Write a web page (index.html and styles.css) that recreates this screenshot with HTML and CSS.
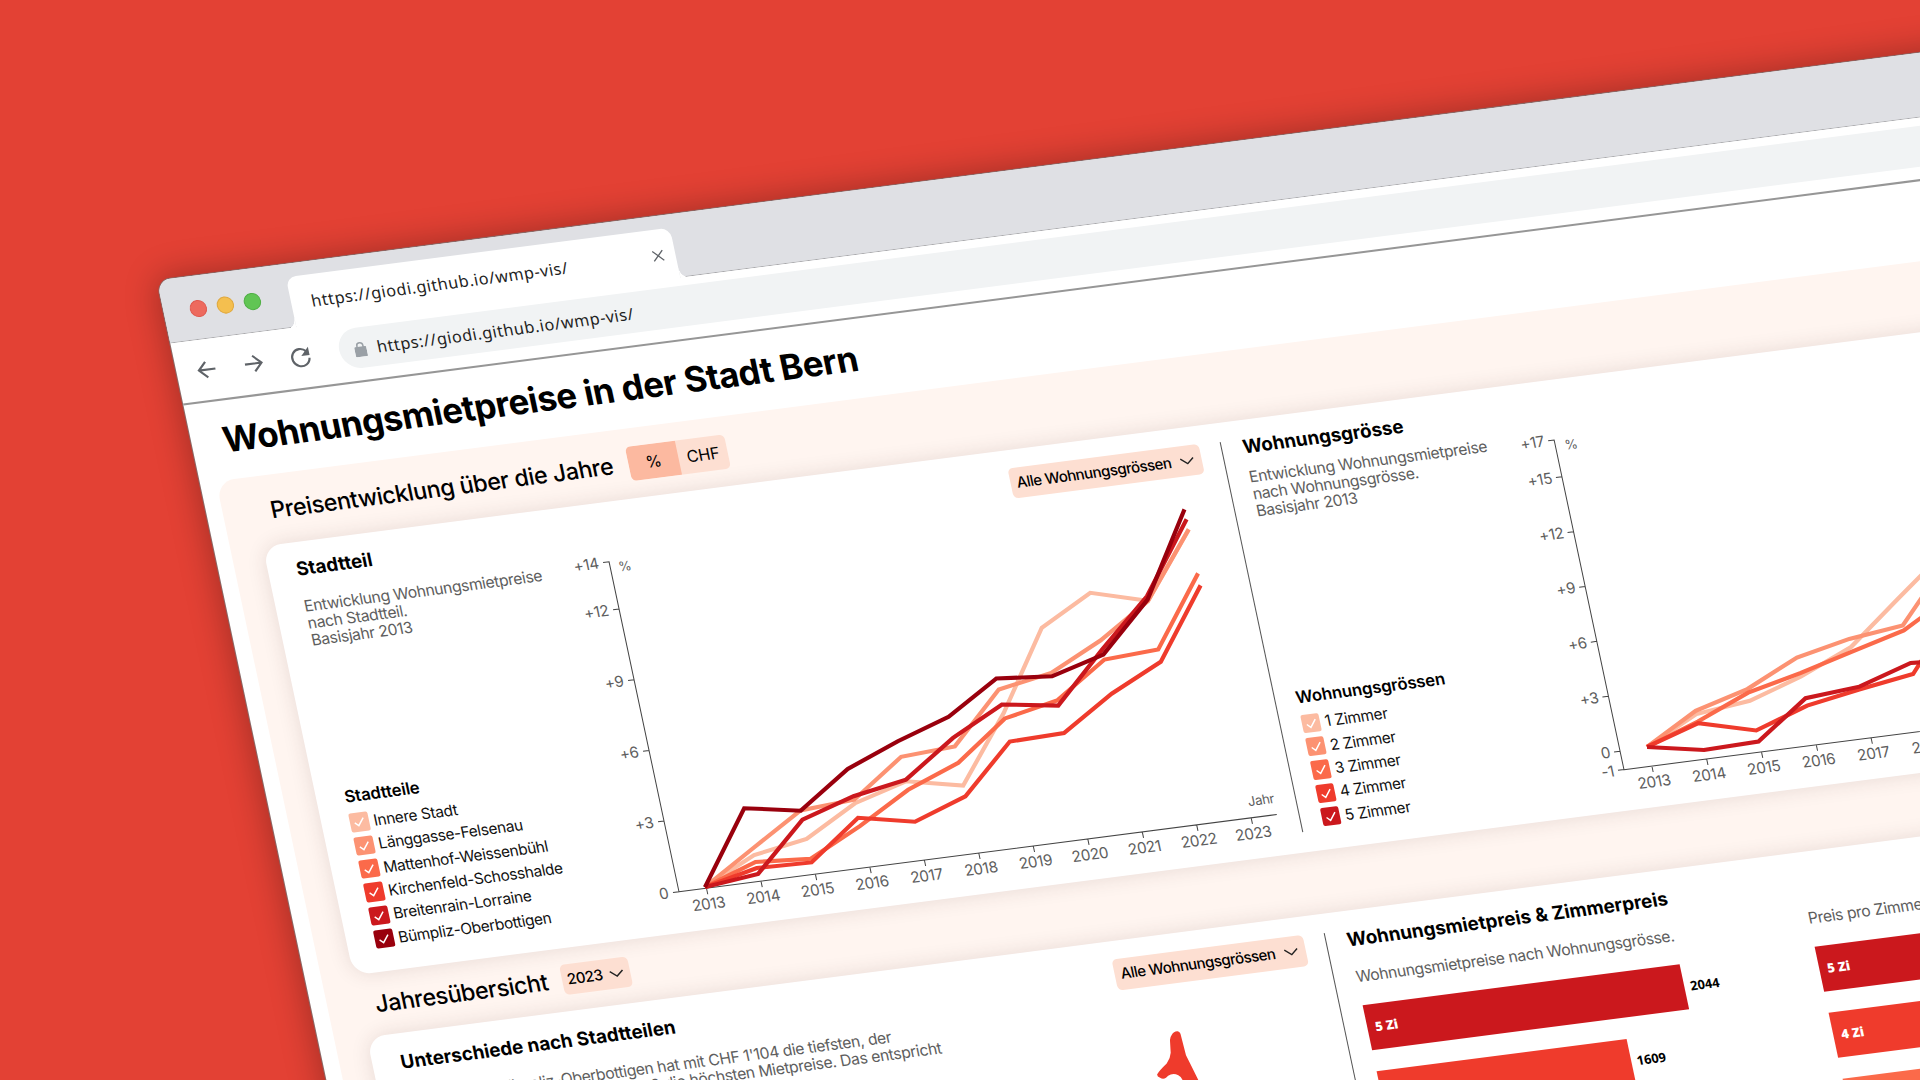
FILE: index.html
```html
<!DOCTYPE html>
<html lang="de">
<head>
<meta charset="utf-8">
<title>Wohnungsmietpreise in der Stadt Bern</title>
<link rel="stylesheet" href="styles.css">
</head>
<body>
<div class="stage">
<div class="window">
  <header class="tabstrip">
    <div class="lights"><i class="light red"></i><i class="light yellow"></i><i class="light green"></i></div>
    <div class="tab">
      <span class="url">https://giodi.github.io/wmp-vis/</span>
      <svg class="close" viewBox="0 0 12 12"><path d="M1 1 11 11M11 1 1 11"/></svg>
    </div>
  </header>
  <nav class="toolbar">
    <svg class="nav" viewBox="0 0 24 24"><path d="M21.500 12H3.500M12 3.500 3.500 12 12 20.500"/></svg>
    <svg class="nav" viewBox="0 0 24 24"><path d="M2.500 12H20.500M12 3.500 20.500 12 12 20.500"/></svg>
    <svg class="nav reload" viewBox="0 0 24 24"><path d="M19.300 6.300A9.300 9.300 0 1 0 21.300 13.500"/><path class="solid" d="M22 1.500V10.500H13Z"/></svg>
    <div class="address">
      <svg class="lock" viewBox="0 0 12 15"><rect x="0" y="5" width="12" height="10" rx="1.200"/><path d="M3 6V4a3 3 0 0 1 6 0V6"/></svg>
      <span class="url">https://giodi.github.io/wmp-vis/</span>
    </div>
  </nav>
  <main class="page">
    <h1>Wohnungsmietpreise in der Stadt Bern</h1>
    <div class="panel">
      <div class="section-head">
        <h2>Preisentwicklung über die Jahre</h2>
        <div class="toggle"><span class="on">%</span><span>CHF</span></div>
      </div>
      <section class="card trend">
        <div class="left">
          <div class="side">
            <h3 class="hood">Stadtteil</h3>
            <p class="desc spaced">Entwicklung Wohnungsmietpreise<br>nach Stadtteil.<br>Basisjahr 2013</p>
            <div class="legend">
              <h4>Stadtteile</h4>
              <label><i class="box c1"><svg viewBox="0 0 18 18"><path d="M4.500 9.500 7.800 12.700 13.500 5.500"/></svg></i>Innere Stadt</label>
              <label><i class="box c2"><svg viewBox="0 0 18 18"><path d="M4.500 9.500 7.800 12.700 13.500 5.500"/></svg></i>Länggasse-Felsenau</label>
              <label><i class="box c3"><svg viewBox="0 0 18 18"><path d="M4.500 9.500 7.800 12.700 13.500 5.500"/></svg></i>Mattenhof-Weissenbühl</label>
              <label><i class="box c4"><svg viewBox="0 0 18 18"><path d="M4.500 9.500 7.800 12.700 13.500 5.500"/></svg></i>Kirchenfeld-Schosshalde</label>
              <label><i class="box c5"><svg viewBox="0 0 18 18"><path d="M4.500 9.500 7.800 12.700 13.500 5.500"/></svg></i>Breitenrain-Lorraine</label>
              <label><i class="box c6"><svg viewBox="0 0 18 18"><path d="M4.500 9.500 7.800 12.700 13.500 5.500"/></svg></i>Bümpliz-Oberbottigen</label>
            </div>
          </div>
          <div class="plot">
            <div class="select wide">Alle Wohnungsgrössen<svg viewBox="0 0 14 8"><path d="M1 1.500 7 6.500 13 1.500"/></svg></div>
            <svg class="chart" viewBox="346 320 655 370">
              <g class="axis">
                <path d="M376 330.700H382V660.600H376M376 377.900H382M376 448.600H382M376 519.300H382M376 589.900H382M382 660.600H979.800M409.500 660.600v6M464 660.600v6M518.400 660.600v6M572.900 660.600v6M627.400 660.600v6M681.800 660.600v6M736.300 660.600v6M790.800 660.600v6M845.300 660.600v6M899.700 660.600v6M954.200 660.600v6"/>
                <g class="end"><text x="371.500" y="335.900">+14</text><text x="371.500" y="383.100">+12</text><text x="371.500" y="453.800">+9</text><text x="371.500" y="524.500">+6</text><text x="371.500" y="595.100">+3</text><text x="371.500" y="665.800">0</text><text class="unit" x="980.500" y="649">Jahr</text></g>
                <g class="mid"><text x="408.500" y="681.400">2013</text><text x="463" y="681.400">2014</text><text x="517.400" y="681.400">2015</text><text x="571.900" y="681.400">2016</text><text x="626.400" y="681.400">2017</text><text x="680.800" y="681.400">2018</text><text x="735.300" y="681.400">2019</text><text x="789.800" y="681.400">2020</text><text x="844.300" y="681.400">2021</text><text x="898.700" y="681.400">2022</text><text x="953.200" y="681.400">2023</text><text class="unit" x="396.500" y="341.300">%</text></g>
              </g>
              <g class="lines" transform="translate(-1.3 -.6)">
                <polyline class="s1" points="409.500,660 464,635 518.400,625.900 572.900,597.200 627.400,582.200 681.800,593.600 736.300,528 790.800,450 845.300,421.900 899.700,437 954.200,372.600"/>
                <polyline class="s2" points="409.500,660 464,628.400 518.400,597.400 572.900,593.700 627.400,557.800 681.800,554.400 736.300,504.600 790.800,495 845.300,469.700 899.700,437.300 954.200,372.600"/>
                <polyline class="s3" points="409.500,660 464,641.900 518.400,645.600 572.900,620.100 627.400,590.800 681.800,570.800 736.300,533.500 790.800,522.600 845.300,488.700 899.700,485.700 954.200,416.600"/>
                <polyline class="s4" points="409.500,660 464,647.900 518.400,649.300 572.900,611.700 627.400,622.700 681.800,604.300 736.300,556.600 790.800,555.100 845.300,522.900 899.700,498 954.200,428.600"/>
                <polyline class="s5" points="409.500,660 464,653.800 518.400,606.500 572.900,590.200 627.400,580.600 681.800,545.900 736.300,519.500 790.800,527.700 845.300,478.500 899.700,432.500 954.200,362.500"/>
                <polyline class="s6" points="409.500,660 464,588.100 518.400,597.600 572.900,562.900 627.400,542.200 681.800,524.900 736.300,493.500 790.800,498.400 845.300,483.700 899.700,435.700 954.200,352.500"/>
              </g>
            </svg>
          </div>
        </div>
        <div class="right">
          <div class="side">
            <h3 class="size">Wohnungsgrösse</h3>
            <p class="desc">Entwicklung Wohnungsmietpreise<br>nach Wohnungsgrösse.<br>Basisjahr 2013</p>
            <div class="legend">
              <h4>Wohnungsgrössen</h4>
              <label><i class="box c1"><svg viewBox="0 0 18 18"><path d="M4.500 9.500 7.800 12.700 13.500 5.500"/></svg></i>1 Zimmer</label>
              <label><i class="box c2"><svg viewBox="0 0 18 18"><path d="M4.500 9.500 7.800 12.700 13.500 5.500"/></svg></i>2 Zimmer</label>
              <label><i class="box c3"><svg viewBox="0 0 18 18"><path d="M4.500 9.500 7.800 12.700 13.500 5.500"/></svg></i>3 Zimmer</label>
              <label><i class="box c4"><svg viewBox="0 0 18 18"><path d="M4.500 9.500 7.800 12.700 13.500 5.500"/></svg></i>4 Zimmer</label>
              <label><i class="box c5"><svg viewBox="0 0 18 18"><path d="M4.500 9.500 7.800 12.700 13.500 5.500"/></svg></i>5 Zimmer</label>
            </div>
          </div>
          <svg class="chart" viewBox="1290 320 655 370">
            <g class="axis">
              <path d="M1321 331H1327V660.400H1321M1321 367.700H1327M1321 422.600H1327M1321 477.400H1327M1321 532.300H1327M1321 587.200H1327M1321 642.100H1327M1327 660.600H1940M1354.900 660.600v6M1409.700 660.600v6M1464.500 660.600v6M1519.300 660.600v6M1574.100 660.600v6M1628.900 660.600v6M1683.700 660.600v6"/>
              <g class="end"><text x="1317" y="336.200">+17</text><text x="1317" y="372.900">+15</text><text x="1317" y="427.800">+12</text><text x="1317" y="482.600">+9</text><text x="1317" y="537.500">+6</text><text x="1317" y="592.400">+3</text><text x="1317" y="647.300">0</text><text x="1317" y="665.800">-1</text></g>
              <g class="mid"><text x="1354" y="681.400">2013</text><text x="1408.800" y="681.400">2014</text><text x="1463.600" y="681.400">2015</text><text x="1518.400" y="681.400">2016</text><text x="1573.200" y="681.400">2017</text><text x="1628" y="681.400">2018</text><text class="unit" x="1342.500" y="341.800">%</text></g>
            </g>
            <g class="lines" transform="translate(-.8 -.4)">
              <polyline class="s1" points="1354.900,641.800 1409.700,616 1464.500,609.800 1519.300,592.600 1574.100,570.200 1628.900,529.700 1683.700,490"/>
              <polyline class="s2" points="1354.900,641.800 1409.700,612.700 1464.500,598.100 1519.300,573.600 1574.100,562.100 1628.900,555.700 1683.700,500"/>
              <polyline class="s3" points="1354.900,641.800 1409.700,623.400 1464.500,601.700 1519.300,589.200 1574.100,574.900 1628.900,560.600 1683.700,532"/>
              <polyline class="s4" points="1354.900,641.800 1409.700,625.100 1464.500,639.500 1519.300,621.700 1574.100,612.400 1628.900,604.300 1683.700,545"/>
              <polyline class="s5" points="1354.900,641.800 1409.700,651.900 1464.500,650.500 1519.300,614.300 1574.100,609.800 1628.900,593.200 1683.700,597"/>
            </g>
          </svg>
        </div>
      </section>
      <div class="section-head year">
        <h2>Jahresübersicht</h2>
        <div class="select">2023<svg viewBox="0 0 14 8"><path d="M1 1.500 7 6.500 13 1.500"/></svg></div>
      </div>
      <section class="card overview">
        <div class="left">
          <div class="side broad">
            <h3 class="diff">Unterschiede nach Stadtteilen</h3>
            <p class="desc spaced">Der Stadtteil Bümpliz-Oberbottigen hat mit CHF 1'104 die tiefsten, der<br>Stadtteil Innere Stadt mit CHF 1'600 die höchsten Mietpreise. Das entspricht</p>
          </div>
          <div class="plot">
            <div class="select wide">Alle Wohnungsgrössen<svg viewBox="0 0 14 8"><path d="M1 1.500 7 6.500 13 1.500"/></svg></div>
            <svg class="map" viewBox="661 812 340 188"><path d="M832 862.100Q835 858.500 838.500 859.200Q840.500 859.500 840.800 862L841.800 883.400Q845 895 848.700 909.300L854 950H840L833.400 907.300Q832.500 903.500 830.200 901.900Q826.500 899.300 823 900.300Q820 901 817.700 902.900Q814.500 904.300 811.900 902.200Q809 900.500 809.800 898.500Q812 895.500 821.300 889.100Q826 884.500 827.400 879.200L829.200 867.400Q829.500 864.500 832 862.100Z"/></svg>
          </div>
        </div>
        <div class="right">
          <h3 class="price">Wohnungsmietpreis &amp; Zimmerpreis</h3>
          <div class="bars-grid">
            <div class="bars">
              <p class="desc">Wohnungsmietpreise nach Wohnungsgrösse.</p>
              <div class="row"><b class="c5" style="width:317.500px">5 Zi</b>2044</div>
              <div class="row"><b class="c4" style="width:250px">4 Zi</b>1609</div>
            </div>
            <div class="bars">
              <p class="desc">Preis pro Zimmer.</p>
              <div class="row"><b class="c5" style="width:255px">5 Zi</b></div>
              <div class="row"><b class="c4" style="width:250px">4 Zi</b></div>
              <div class="row"><b class="c3" style="width:275px"></b></div>
            </div>
          </div>
        </div>
      </section>
    </div>
  </main>
</div>
</div>
</body>
</html>
```
FILE: styles.css
```css
* { box-sizing: border-box; }
body { margin: 0; background: #e34134; font-family: Inter, "Liberation Sans", sans-serif; color: #000; }
h1, h2, h3, h4, p { margin: 0; }
.stage { width: 1920px; height: 1080px; overflow: hidden; }

/* The whole browser window is laid out flat and then skewed onto the canvas */
.window {
  width: 2000px; height: 1150px; background: #fff; border-radius: 13px 13px 0 0;
  transform-origin: 0 0; transform: matrix(1, -0.1292, 0.2119, 1, 157, 280.5);
  box-shadow: 0 0 0 1px rgba(125, 118, 118, .8), 0 0 32px 3px rgba(0, 0, 0, .28);
}

.tabstrip { display: flex; height: 63px; background: #dfe0e4; border-radius: 13px 13px 0 0; border-bottom: 1px solid #aaaaad; }
.lights { display: flex; gap: 10px; width: 126px; padding: 24.300px 0 0 26px; }
.light { width: 17px; height: 17px; border-radius: 50%; }
.red { background: #ed6a5e; border: 1px solid #e05a50; }
.yellow { background: #f4bf4f; border: 1px solid #e0a83d; }
.green { background: #61c554; border: 1px solid #50b045; }
.tab { position: relative; display: flex; align-items: center; width: 384px; height: 51px; margin-top: 12.500px; padding: 1px 11.500px 0 20px; background: #fff; border-radius: 10px 10px 0 0; }
.tab::before, .tab::after { content: ""; position: absolute; bottom: 0; width: 10px; height: 10px; }
.tab::before { left: -10px; background: radial-gradient(circle at 0 0, transparent 9.500px, #fff 10px); }
.tab::after { right: -10px; background: radial-gradient(circle at 100% 0, transparent 9.500px, #fff 10px); }
.url { font: 16px/24px "Noto Sans", sans-serif; letter-spacing: .56px; color: #222; white-space: nowrap; }
.close { width: 12px; height: 12px; margin-left: auto; stroke: #5f6368; stroke-width: 1.300; fill: none; }

.toolbar { display: flex; align-items: center; height: 62px; padding: 0 0 0 19px; border-bottom: 2px solid #969696; }
.nav { width: 22px; height: 22px; margin-right: 25px; fill: none; stroke: #5f6368; stroke-width: 2.300; }
.nav .solid { fill: #5f6368; stroke: none; }
.reload { margin-right: 28px; }
.address { display: flex; align-items: center; flex: 1; height: 40px; margin-top: -4px; padding: 2px 0 0 15px; background: #f1f3f4; border-radius: 20px 0 0 20px; }
.lock { width: 12px; height: 15px; margin-right: 10.500px; fill: #9aa0a6; }
.lock path { fill: none; stroke: #9aa0a6; stroke-width: 1.500; }

h1 { padding: 19px 0 19px 31.500px; font-size: 34.500px; line-height: 40px; font-weight: 700; white-space: nowrap; letter-spacing: -.45px; }
.panel { margin-left: 15.500px; padding: 18px 0 40px 32.500px; height: 900px; background: #fff5f0; border-radius: 18px 0 0 0; }
.section-head { display: flex; align-items: center; gap: 15.500px; height: 34px; margin-bottom: 16.500px; padding-left: 15px; }
.section-head h2 { font-size: 23px; font-weight: 500; line-height: 30px; white-space: nowrap; padding-bottom: 1px; letter-spacing: -.36px; }
.section-head.year { gap: 14.500px; height: 30.500px; margin: 15.500px 0 16px; }
.section-head.year h2 { padding: 0; }
.toggle { display: flex; height: 34px; border-radius: 5px; overflow: hidden; background: #fddfd2; font-size: 16px; letter-spacing: -.2px; line-height: 34px; text-align: center; }
.toggle span { width: 49px; }
.toggle .on { width: 50px; background: #fcb9a0; }

.card { display: flex; width: 1904px; background: #fff; border-radius: 18px; box-shadow: 0 0 20px rgba(70, 40, 35, .13); }
.trend { height: 429.500px; }
.overview { height: 300px; }
.left { display: flex; width: 953px; padding-left: 28px; }
.left .side { width: 270px; }
.left .broad { width: 585px; }
.left .plot { flex: 1; }
.trend .side { display: flex; flex-direction: column; padding: 14.500px 0 20.300px; }
.overview .side { padding-top: 16.300px; }
h3 { font-size: 18.600px; line-height: 24px; font-weight: 700; white-space: nowrap; }
.desc { margin-top: 10px; font-size: 15.500px; line-height: 17px; letter-spacing: -.35px; color: #5e5e5e; white-space: nowrap; }
.spaced { margin-top: 17px; }
.legend { margin-top: auto; }
.legend h4 { margin-bottom: 4px; font-size: 16.500px; line-height: 22px; font-weight: 600; letter-spacing: -.1px; }
.legend label { display: flex; align-items: center; gap: 5px; height: 23.300px; font-size: 15.200px; letter-spacing: -.3px; color: #111; white-space: nowrap; }
.box { width: 18.500px; height: 18.500px; border-radius: 2px; display: flex; }
.box path { fill: none; stroke: #fff; stroke-width: 1.400; }
.c1 { background: #fcbba1; } .c2 { background: #fc9272; } .c3 { background: #fb6a4a; }
.c4 { background: #ef3b2c; } .c5 { background: #cb181d; } .c6 { background: #99000d; }
.select { display: flex; align-items: center; justify-content: space-between; width: 67.500px; height: 30.500px; padding: 0 6px 0 5px; background: #fddfd2; border-radius: 5px; font-size: 14.800px; letter-spacing: -.45px; font-weight: 500; white-space: nowrap; }
.select svg { flex: none; width: 15px; height: 8.500px; fill: none; stroke: #222; stroke-width: 1.300; }
.select.wide { width: 190.500px; margin: 18px 21.500px 0 auto; padding: 0 7px 0 6px; }

.trend .right, .overview .right { position: relative; flex: 1; padding-left: 21.500px; }
.trend .right { display: flex; }
.right::before { content: ""; position: absolute; left: 0; top: 19px; bottom: 20px; width: 1px; background: #555; }
.trend .right .side { width: 267.500px; }
.chart { display: block; width: 655px; height: 370px; overflow: visible; }
.right .chart { margin-top: 48.500px; }
.map { display: block; width: 340px; height: 188px; margin-left: auto; fill: #ef3b2c; }
.axis path { fill: none; stroke: #444; stroke-width: 1; }
.axis text { font-size: 15px; letter-spacing: -.25px; fill: #5e5e5e; }
.axis .unit { font-size: 13px; }
.end { text-anchor: end; }
.mid { text-anchor: middle; }
.lines polyline { fill: none; stroke-width: 4; }
.s1 { stroke: #fcbba1; } .s2 { stroke: #fc9272; } .s3 { stroke: #fb6a4a; }
.s4 { stroke: #ef3b2c; } .s5 { stroke: #cb181d; } .s6 { stroke: #99000d; }

.overview .right { padding-top: 16.300px; }
.bars-grid { display: grid; grid-template-columns: 452px 400px; padding-left: 1px; }
.bars .desc { margin: 16.500px 0 20px; }
.row { display: flex; align-items: center; gap: 6px; height: 45.500px; margin-bottom: 20.500px; font: 700 12.700px/45.500px "Noto Sans", sans-serif; }
.row b { height: 45.500px; padding-left: 8.500px; color: #fff; }
```
